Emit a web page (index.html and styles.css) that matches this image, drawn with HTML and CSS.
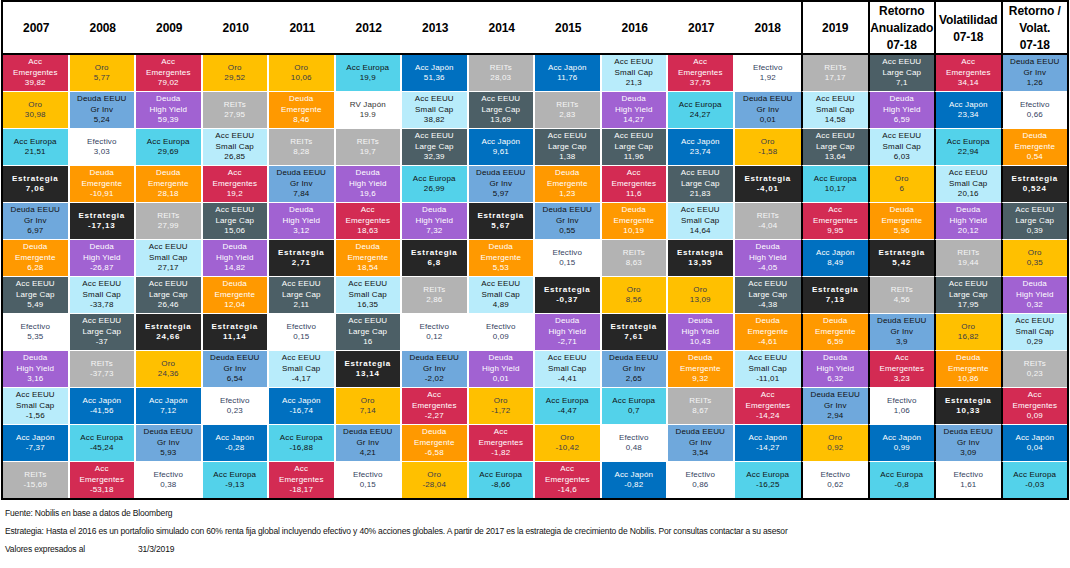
FILE: index.html
```html
<!DOCTYPE html>
<html lang="es">
<head>
<meta charset="utf-8">
<title>Retornos por clase de activo</title>
<link rel="stylesheet" href="styles.css">
</head>
<body>
<div class="sheet">
<div class="g">
<div class="h">2007</div><div class="h">2008</div><div class="h">2009</div><div class="h">2010</div><div class="h">2011</div><div class="h">2012</div><div class="h">2013</div><div class="h">2014</div><div class="h">2015</div><div class="h">2016</div><div class="h">2017</div><div class="h">2018</div><div class="h">2019</div><div class="h">Retorno<br>Anualizado<br>07-18</div><div class="h">Volatilidad<br>07-18</div><div class="h">Retorno /<br>Volat.<br>07-18</div>

<div class="c em">Acc<br>Emergentes<br>39,82</div>
<div class="c oro">Oro<br>5,77</div>
<div class="c em">Acc<br>Emergentes<br>79,02</div>
<div class="c oro">Oro<br>29,52</div>
<div class="c oro">Oro<br>10,06</div>
<div class="c eu">Acc Europa<br>19,9</div>
<div class="c jp">Acc Japón<br>51,36</div>
<div class="c re">REITs<br>28,03</div>
<div class="c jp">Acc Japón<br>11,76</div>
<div class="c sc">Acc EEUU<br>Small Cap<br>21,3</div>
<div class="c em">Acc<br>Emergentes<br>37,75</div>
<div class="c ef">Efectivo<br>1,92</div>
<div class="c re">REITs<br>17,17</div>
<div class="c lc">Acc EEUU<br>Large Cap<br>7,1</div>
<div class="c em">Acc<br>Emergentes<br>34,14</div>
<div class="c gi">Deuda EEUU<br>Gr Inv<br>1,26</div>

<div class="c oro">Oro<br>30,98</div>
<div class="c gi">Deuda EEUU<br>Gr Inv<br>5,24</div>
<div class="c hy">Deuda<br>High Yield<br>59,39</div>
<div class="c re">REITs<br>27,95</div>
<div class="c de">Deuda<br>Emergente<br>8,46</div>
<div class="c rv">RV Japón<br>19.9</div>
<div class="c sc">Acc EEUU<br>Small Cap<br>38,82</div>
<div class="c lc">Acc EEUU<br>Large Cap<br>13,69</div>
<div class="c re">REITs<br>2,83</div>
<div class="c hy">Deuda<br>High Yield<br>14,27</div>
<div class="c eu">Acc Europa<br>24,27</div>
<div class="c gi">Deuda EEUU<br>Gr Inv<br>0,01</div>
<div class="c sc">Acc EEUU<br>Small Cap<br>14,58</div>
<div class="c hy">Deuda<br>High Yield<br>6,59</div>
<div class="c jp">Acc Japón<br>23,34</div>
<div class="c ef">Efectivo<br>0,66</div>

<div class="c eu">Acc Europa<br>21,51</div>
<div class="c ef">Efectivo<br>3,03</div>
<div class="c eu">Acc Europa<br>29,69</div>
<div class="c sc">Acc EEUU<br>Small Cap<br>26,85</div>
<div class="c re">REITs<br>8,28</div>
<div class="c re">REITs<br>19,7</div>
<div class="c lc">Acc EEUU<br>Large Cap<br>32,39</div>
<div class="c jp">Acc Japón<br>9,61</div>
<div class="c lc">Acc EEUU<br>Large Cap<br>1,38</div>
<div class="c lc">Acc EEUU<br>Large Cap<br>11,96</div>
<div class="c jp">Acc Japón<br>23,74</div>
<div class="c oro">Oro<br>-1,58</div>
<div class="c lc">Acc EEUU<br>Large Cap<br>13,64</div>
<div class="c sc">Acc EEUU<br>Small Cap<br>6,03</div>
<div class="c eu">Acc Europa<br>22,94</div>
<div class="c de">Deuda<br>Emergente<br>0,54</div>

<div class="c es">Estrategia<br>7,06</div>
<div class="c de">Deuda<br>Emergente<br>-10,91</div>
<div class="c de">Deuda<br>Emergente<br>28,18</div>
<div class="c em">Acc<br>Emergentes<br>19,2</div>
<div class="c gi">Deuda EEUU<br>Gr Inv<br>7,84</div>
<div class="c hy">Deuda<br>High Yield<br>19,6</div>
<div class="c eu">Acc Europa<br>26,99</div>
<div class="c gi">Deuda EEUU<br>Gr Inv<br>5,97</div>
<div class="c de">Deuda<br>Emergente<br>1,23</div>
<div class="c em">Acc<br>Emergentes<br>11,6</div>
<div class="c lc">Acc EEUU<br>Large Cap<br>21,83</div>
<div class="c es">Estrategia<br>-4,01</div>
<div class="c eu">Acc Europa<br>10,17</div>
<div class="c oro">Oro<br>6</div>
<div class="c sc">Acc EEUU<br>Small Cap<br>20,16</div>
<div class="c es">Estrategia<br>0,524</div>

<div class="c gi">Deuda EEUU<br>Gr Inv<br>6,97</div>
<div class="c es">Estrategia<br>-17,13</div>
<div class="c re">REITs<br>27,99</div>
<div class="c lc">Acc EEUU<br>Large Cap<br>15,06</div>
<div class="c hy">Deuda<br>High Yield<br>3,12</div>
<div class="c em">Acc<br>Emergentes<br>18,63</div>
<div class="c hy">Deuda<br>High Yield<br>7,32</div>
<div class="c es">Estrategia<br>5,67</div>
<div class="c gi">Deuda EEUU<br>Gr Inv<br>0,55</div>
<div class="c de">Deuda<br>Emergente<br>10,19</div>
<div class="c sc">Acc EEUU<br>Small Cap<br>14,64</div>
<div class="c re">REITs<br>-4,04</div>
<div class="c em">Acc<br>Emergentes<br>9,95</div>
<div class="c de">Deuda<br>Emergente<br>5,96</div>
<div class="c hy">Deuda<br>High Yield<br>20,12</div>
<div class="c lc">Acc EEUU<br>Large Cap<br>0,39</div>

<div class="c de">Deuda<br>Emergente<br>6,28</div>
<div class="c hy">Deuda<br>High Yield<br>-26,87</div>
<div class="c sc">Acc EEUU<br>Small Cap<br>27,17</div>
<div class="c hy">Deuda<br>High Yield<br>14,82</div>
<div class="c es">Estrategia<br>2,71</div>
<div class="c de">Deuda<br>Emergente<br>18,54</div>
<div class="c es">Estrategia<br>6,8</div>
<div class="c de">Deuda<br>Emergente<br>5,53</div>
<div class="c ef">Efectivo<br>0,15</div>
<div class="c re">REITs<br>8,63</div>
<div class="c es">Estrategia<br>13,55</div>
<div class="c hy">Deuda<br>High Yield<br>-4,05</div>
<div class="c jp">Acc Japón<br>8,49</div>
<div class="c es">Estrategia<br>5,42</div>
<div class="c re">REITs<br>19,44</div>
<div class="c oro">Oro<br>0,35</div>

<div class="c lc">Acc EEUU<br>Large Cap<br>5,49</div>
<div class="c sc">Acc EEUU<br>Small Cap<br>-33,78</div>
<div class="c lc">Acc EEUU<br>Large Cap<br>26,46</div>
<div class="c de">Deuda<br>Emergente<br>12,04</div>
<div class="c lc">Acc EEUU<br>Large Cap<br>2,11</div>
<div class="c sc">Acc EEUU<br>Small Cap<br>16,35</div>
<div class="c re">REITs<br>2,86</div>
<div class="c sc">Acc EEUU<br>Small Cap<br>4,89</div>
<div class="c es">Estrategia<br>-0,37</div>
<div class="c oro">Oro<br>8,56</div>
<div class="c oro">Oro<br>13,09</div>
<div class="c lc">Acc EEUU<br>Large Cap<br>-4,38</div>
<div class="c es">Estrategia<br>7,13</div>
<div class="c re">REITs<br>4,56</div>
<div class="c lc">Acc EEUU<br>Large Cap<br>17,95</div>
<div class="c hy">Deuda<br>High Yield<br>0,32</div>

<div class="c ef">Efectivo<br>5,35</div>
<div class="c lc">Acc EEUU<br>Large Cap<br>-37</div>
<div class="c es">Estrategia<br>24,66</div>
<div class="c es">Estrategia<br>11,14</div>
<div class="c ef">Efectivo<br>0,15</div>
<div class="c lc">Acc EEUU<br>Large Cap<br>16</div>
<div class="c ef">Efectivo<br>0,12</div>
<div class="c ef">Efectivo<br>0,09</div>
<div class="c hy">Deuda<br>High Yield<br>-2,71</div>
<div class="c es">Estrategia<br>7,61</div>
<div class="c hy">Deuda<br>High Yield<br>10,43</div>
<div class="c de">Deuda<br>Emergente<br>-4,61</div>
<div class="c de">Deuda<br>Emergente<br>6,59</div>
<div class="c gi">Deuda EEUU<br>Gr Inv<br>3,9</div>
<div class="c oro">Oro<br>16,82</div>
<div class="c sc">Acc EEUU<br>Small Cap<br>0,29</div>

<div class="c hy">Deuda<br>High Yield<br>3,16</div>
<div class="c re">REITs<br>-37,73</div>
<div class="c oro">Oro<br>24,36</div>
<div class="c gi">Deuda EEUU<br>Gr Inv<br>6,54</div>
<div class="c sc">Acc EEUU<br>Small Cap<br>-4,17</div>
<div class="c es">Estrategia<br>13,14</div>
<div class="c gi">Deuda EEUU<br>Gr Inv<br>-2,02</div>
<div class="c hy">Deuda<br>High Yield<br>0,01</div>
<div class="c sc">Acc EEUU<br>Small Cap<br>-4,41</div>
<div class="c gi">Deuda EEUU<br>Gr Inv<br>2,65</div>
<div class="c de">Deuda<br>Emergente<br>9,32</div>
<div class="c sc">Acc EEUU<br>Small Cap<br>-11,01</div>
<div class="c hy">Deuda<br>High Yield<br>6,32</div>
<div class="c em">Acc<br>Emergentes<br>3,23</div>
<div class="c de">Deuda<br>Emergente<br>10,86</div>
<div class="c re">REITs<br>0,23</div>

<div class="c sc">Acc EEUU<br>Small Cap<br>-1,56</div>
<div class="c jp">Acc Japón<br>-41,56</div>
<div class="c jp">Acc Japón<br>7,12</div>
<div class="c ef">Efectivo<br>0,23</div>
<div class="c jp">Acc Japón<br>-16,74</div>
<div class="c oro">Oro<br>7,14</div>
<div class="c em">Acc<br>Emergentes<br>-2,27</div>
<div class="c oro">Oro<br>-1,72</div>
<div class="c eu">Acc Europa<br>-4,47</div>
<div class="c eu">Acc Europa<br>0,7</div>
<div class="c re">REITs<br>8,67</div>
<div class="c em">Acc<br>Emergentes<br>-14,24</div>
<div class="c gi">Deuda EEUU<br>Gr Inv<br>2,94</div>
<div class="c ef">Efectivo<br>1,06</div>
<div class="c es">Estrategia<br>10,33</div>
<div class="c em">Acc<br>Emergentes<br>0,09</div>

<div class="c jp">Acc Japón<br>-7,37</div>
<div class="c eu">Acc Europa<br>-45,24</div>
<div class="c gi">Deuda EEUU<br>Gr Inv<br>5,93</div>
<div class="c jp">Acc Japón<br>-0,28</div>
<div class="c eu">Acc Europa<br>-16,88</div>
<div class="c gi">Deuda EEUU<br>Gr Inv<br>4,21</div>
<div class="c de">Deuda<br>Emergente<br>-6,58</div>
<div class="c em">Acc<br>Emergentes<br>-1,82</div>
<div class="c oro">Oro<br>-10,42</div>
<div class="c ef">Efectivo<br>0,48</div>
<div class="c gi">Deuda EEUU<br>Gr Inv<br>3,54</div>
<div class="c jp">Acc Japón<br>-14,27</div>
<div class="c oro">Oro<br>0,92</div>
<div class="c jp">Acc Japón<br>0,99</div>
<div class="c gi">Deuda EEUU<br>Gr Inv<br>3,09</div>
<div class="c jp">Acc Japón<br>0,04</div>

<div class="c re">REITs<br>-15,69</div>
<div class="c em">Acc<br>Emergentes<br>-53,18</div>
<div class="c ef">Efectivo<br>0,38</div>
<div class="c eu">Acc Europa<br>-9,13</div>
<div class="c em">Acc<br>Emergentes<br>-18,17</div>
<div class="c ef">Efectivo<br>0,15</div>
<div class="c oro">Oro<br>-28,04</div>
<div class="c eu">Acc Europa<br>-8,66</div>
<div class="c em">Acc<br>Emergentes<br>-14,6</div>
<div class="c jp">Acc Japón<br>-0,82</div>
<div class="c ef">Efectivo<br>0,86</div>
<div class="c eu">Acc Europa<br>-16,25</div>
<div class="c ef">Efectivo<br>0,62</div>
<div class="c eu">Acc Europa<br>-0,8</div>
<div class="c ef">Efectivo<br>1,61</div>
<div class="c eu">Acc Europa<br>-0,03</div>
</div>

<div class="notes">
<p>Fuente: Nobilis en base a datos de Bloomberg</p>
<p>Estrategia: Hasta el 2016 es un portafolio simulado con 60% renta fija global incluyendo efectivo y 40% acciones globales. A partir de 2017 es la estrategia de crecimiento de Nobilis. Por consultas contactar a su asesor</p>
<p><span class="lbl">Valores expresados al</span>31/3/2019</p>
</div>
</div>
</body>
</html>
```

FILE: styles.css
```css
* { box-sizing: border-box; }
html, body { margin: 0; padding: 0; background: #fff; }
body { font-family: "Liberation Sans", Arial, sans-serif; }

.sheet { width: 1070px; height: 568px; padding-left: 1px; }

.g {
  display: grid;
  grid-template-columns: repeat(16, 1fr);
  width: 1068px;
  border: 2px solid #000;
  background: #fff;
}

.h {
  height: 53px;
  padding-top: 2px;
  border-bottom: 2px solid #000;
  display: flex;
  align-items: center;
  justify-content: center;
  text-align: center;
  font-weight: bold;
  font-size: 12px;
  line-height: 17px;
  color: #000;
  letter-spacing: -0.1px;
}

.c {
  height: 37px;
  border-right: 2px solid #fff;
  border-bottom: 1px solid #fff;
  display: flex;
  align-items: center;
  justify-content: center;
  text-align: center;
  font-size: 8px;
  line-height: 10.5px;
  letter-spacing: 0.15px;
  color: #fff;
}

.g > :nth-child(16n+12) { border-right: 0; }
.g > :nth-child(16n+13),
.g > :nth-child(16n+14),
.g > :nth-child(16n+15),
.g > :nth-child(16n+16) { border-left: 2px solid #000; border-right: 0; }
.g > .c:nth-last-child(-n+16) { border-bottom: 0; height: 36px; }

.em { background: #d32b53; color: #fff; }
.oro { background: #ffc000; color: #3a3b4a; }
.gi { background: #6fa8dc; color: #111; }
.hy { background: #a162d2; color: #fff; }
.re { background: #b3b3b3; color: #f6f6f6; }
.eu { background: #53d2ea; color: #111; }
.ef { background: #fff; color: #34425e; }
.rv { background: #fff; color: #333; }
.sc { background: #b8ecfb; color: #111; }
.es { background: #262626; color: #fff; font-weight: bold; letter-spacing: 0.8px; }
.de { background: #ff9900; color: #fff; }
.lc { background: #4c5f66; color: #fff; }
.jp { background: #0070c0; color: #fff; }

.notes { padding: 4px 0 0 4px; }
.notes p {
  margin: 0;
  font-size: 8.5px;
  line-height: 18px;
  color: #111;
  letter-spacing: -0.17px;
  white-space: nowrap;
}
.lbl { display: inline-block; width: 133px; }
```
